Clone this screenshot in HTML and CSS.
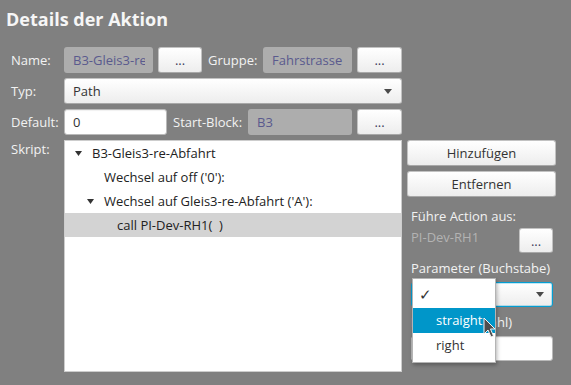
FILE: index.html
```html
<!DOCTYPE html>
<html lang="de">
<head>
<meta charset="utf-8">
<title>Details der Aktion</title>
<link rel="stylesheet" href="styles.css">
</head>
<body>
<div class="window">
  <h1 class="title">Details der Aktion</h1>
  <div class="form">
    <div class="row">
      <span class="lbl lbl-main">Name:</span>
      <div class="field disabled w-name"><span class="clip">B3-Gleis3-re-Abfahrt</span></div>
      <button class="btn dots w-dots">...</button>
      <span class="lbl lbl-gruppe">Gruppe:</span>
      <div class="field disabled w-name"><span class="clip">Fahrstrasse</span></div>
      <button class="btn dots w-dots2">...</button>
    </div>
    <div class="row">
      <span class="lbl lbl-main">Typ:</span>
      <div class="combo w-typ">
        <span class="combo-text">Path</span>
        <svg class="arrow" width="8" height="5" viewBox="0 0 8 5"><path d="M0 0H8L4 5Z" fill="#4a4a4a"/></svg>
      </div>
    </div>
    <div class="row">
      <span class="lbl lbl-main">Default:</span>
      <div class="field input w-default"><span class="clip">0</span></div>
      <span class="lbl lbl-start">Start-Block:</span>
      <div class="field disabled w-start"><span class="clip">B3</span></div>
      <button class="btn dots w-dots2">...</button>
    </div>
    <div class="row script-row">
      <span class="lbl lbl-main lbl-top">Skript:</span>
      <div class="tree">
        <div class="tree-row lvl0"><svg class="tri" width="7" height="5" viewBox="0 0 7 5"><path d="M0 0H7L3.5 5Z" fill="#333"/></svg><span>B3-Gleis3-re-Abfahrt</span></div>
        <div class="tree-row lvl1 leaf"><span>Wechsel auf off ('0'):</span></div>
        <div class="tree-row lvl1"><svg class="tri" width="7" height="5" viewBox="0 0 7 5"><path d="M0 0H7L3.5 5Z" fill="#333"/></svg><span>Wechsel auf Gleis3-re-Abfahrt ('A'):</span></div>
        <div class="tree-row lvl2 leaf selected"><span>call PI-Dev-RH1(&nbsp;&nbsp;)</span></div>
      </div>
      <div class="side">
        <button class="btn side-btn">Hinzufügen</button>
        <button class="btn side-btn">Entfernen</button>
        <div class="side-lbl lbl first">Führe Action aus:</div>
        <div class="action-row">
          <span class="disabled-lbl">PI-Dev-RH1</span>
          <button class="btn dots small-dots">...</button>
        </div>
        <div class="side-lbl lbl">Parameter (Buchstabe)</div>
        <div class="combo focused side-combo">
          <span class="combo-text"></span>
          <svg class="arrow" width="8" height="5" viewBox="0 0 8 5"><path d="M0 0H8L4 5Z" fill="#4a4a4a"/></svg>
        </div>
        <div class="side-lbl lbl">Parameter (Zahl)</div>
        <div class="field input side-input"></div>
      </div>
    </div>
  </div>

  <div class="popup">
    <div class="pop-item check-item"><span class="check">✓</span></div>
    <div class="pop-item hover">straight</div>
    <div class="pop-item">right</div>
  </div>

  <svg class="cursor" width="13" height="22" viewBox="0 0 13 22">
    <path d="M1 1 L1 17 L5 13 L8 20 L10.5 19 L7.5 12 L12 12 Z" fill="#4d4d4d" stroke="#f4f4f4" stroke-width="1" stroke-linejoin="round"/>
  </svg>
</div>
</body>
</html>
```

FILE: styles.css
```css
html, body {
  margin: 0;
  padding: 0;
}

body {
  background: #808080;
  font-family: "Open Sans", "Noto Sans", sans-serif;
  font-size: 13px;
  color: #333;
  width: 571px;
  height: 385px;
  overflow: hidden;
}

.window {
  position: relative;
  width: 571px;
  height: 385px;
}

.title {
  margin: 0;
  padding: 7px 0 0 6px;
  height: 31px;
  box-sizing: border-box;
  font-size: 18px;
  font-weight: bold;
  line-height: 24px;
  color: #f6f6f6;
}

.form {
  padding: 16px 0 0 11px;
  display: flex;
  flex-direction: column;
  gap: 5px;
}

.row {
  display: flex;
  align-items: center;
  height: 26px;
}

.lbl {
  color: #f2f2f2;
  white-space: nowrap;
}

.lbl-main { width: 53px; flex: none; }
.lbl-gruppe { width: 55px; margin-left: 6px; flex: none; }
.lbl-start { width: 75px; margin-left: 6px; flex: none; }

.field {
  box-sizing: border-box;
  height: 26px;
  border-radius: 3px;
  padding: 0 8px 0 9px;
  display: flex;
  align-items: center;
  flex: none;
}

.clip {
  display: block;
  overflow: hidden;
  white-space: nowrap;
  width: 100%;
}

.field.disabled {
  background: #adadad;
  color: #5a5a8e;
}

.field.input {
  background: #fff;
  border: 1px solid #b9b9b9;
  box-shadow: inset 0 1px 1px rgba(0,0,0,0.06);
  color: #333;
  padding-left: 8px;
}

.w-name { width: 89px; }
.w-default { width: 103px; }
.w-start { width: 104px; }

.btn {
  box-sizing: border-box;
  font: inherit;
  color: #333;
  margin: 0;
  padding: 0;
  border: 1px solid #c2c2c2;
  border-bottom-color: #a8a8a8;
  border-radius: 3px;
  background: linear-gradient(#ffffff, #ededed);
  height: 26px;
  flex: none;
  text-align: center;
  cursor: default;
}

.dots { line-height: 20px; color: #3d3d5c; }
.w-dots { width: 44px; margin-left: 5px; }
.w-dots2 { width: 45px; margin-left: 5px; }

.combo {
  box-sizing: border-box;
  height: 26px;
  border: 1px solid #c2c2c2;
  border-bottom-color: #a8a8a8;
  border-radius: 3px;
  background: linear-gradient(#ffffff, #ededed);
  display: flex;
  align-items: center;
  justify-content: space-between;
  padding: 0 9px 0 8px;
  flex: none;
}

.combo-text { color: #333; }
.w-typ { width: 338px; }

.script-row {
  height: 232px;
  align-items: flex-start;
}

.lbl-top { line-height: 18px; }

.tree {
  box-sizing: border-box;
  width: 338px;
  height: 232px;
  background: #fff;
  border: 1px solid #cdcdcd;
  flex: none;
}

.tree-row {
  height: 24px;
  display: flex;
  align-items: center;
  color: #222;
  white-space: nowrap;
}

.tree-row .tri {
  width: 7px;
  margin-right: 10px;
  flex: none;
}

.tree-row.leaf span { padding-left: 17px; }

.lvl0 { padding-left: 10px; }
.lvl1 { padding-left: 22px; }
.lvl2 { padding-left: 35px; }

.tree-row.selected { background: #d3d3d3; }

.side {
  width: 149px;
  margin-left: 5px;
  display: flex;
  flex-direction: column;
  flex: none;
}

.side-btn {
  width: 149px;
  margin-bottom: 5px;
}

.side-lbl {
  height: 24px;
  line-height: 24px;
  margin: 3px 0 0 4px;
}

.side-lbl.first { margin-top: 2px; }

.action-row {
  display: flex;
  justify-content: space-between;
  align-items: flex-start;
  height: 25px;
  margin: 0 3px 0 4px;
}

.disabled-lbl {
  color: #b3b3b3;
  line-height: 18px;
}

.small-dots {
  width: 34px;
  height: 25px;
}

.side-combo {
  height: 25px;
  margin: 2px 3px 0 4px;
  border: 1px solid #039ed3;
  box-shadow: inset 0 0 0 1px rgba(3, 158, 211, 0.25);
  padding-right: 8px;
}

.side-input {
  height: 25px;
  margin: 2px 3px 0 4px;
}

.popup {
  position: absolute;
  left: 412px;
  top: 278px;
  width: 84px;
  height: 85px;
  box-sizing: border-box;
  background: #fff;
  border: 1px solid #b4b4b4;
  box-shadow: 1px 2px 4px rgba(0,0,0,0.3);
  display: flex;
  flex-direction: column;
}

.pop-item {
  height: 25px;
  line-height: 25px;
  padding-left: 23px;
  color: #333;
  white-space: nowrap;
}

.pop-item.check-item {
  height: 29px;
  line-height: 31px;
  padding-left: 6px;
}

.check { font-size: 15px; color: #333; }

.pop-item.hover {
  background: #0096c9;
  color: #fff;
}

.cursor {
  position: absolute;
  left: 483px;
  top: 317px;
}
```
